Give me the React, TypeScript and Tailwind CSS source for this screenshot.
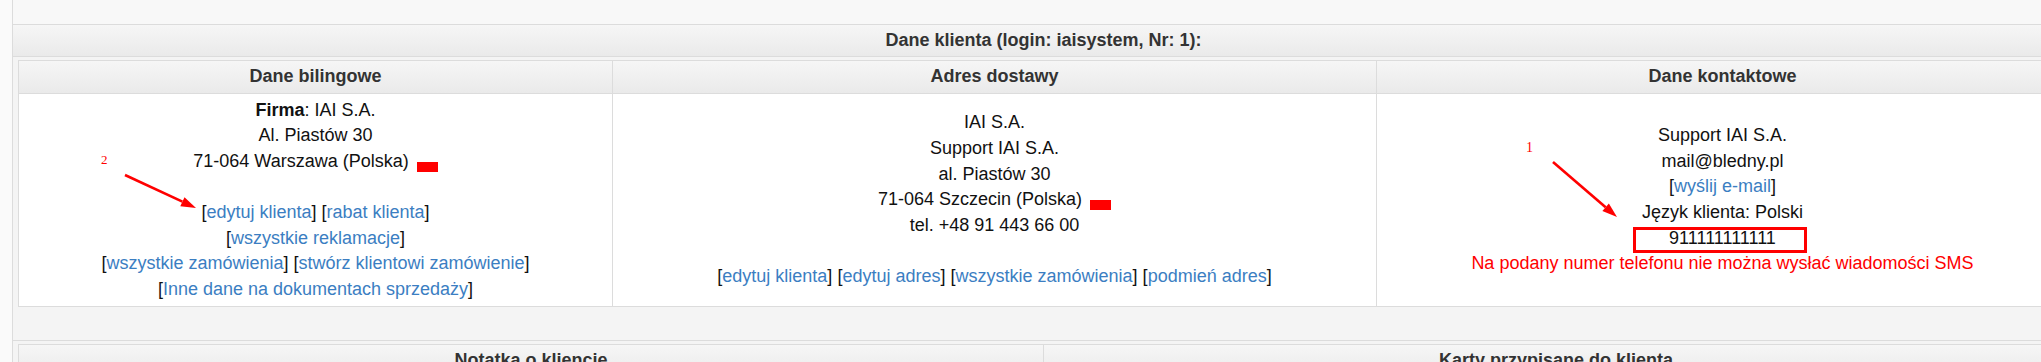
import React from "react";

function Lk({ children }: { children: string }) {
  return (
    <span>
      [<a href="#" className="text-[#3b7ec2] no-underline">{children}</a>]
    </span>
  );
}

function Flag() {
  return <span className="ml-[3px] inline-block h-[10px] w-[21px] bg-[#ff0000] align-[-5px]" />;
}

function Arrow({ x1, y1, x2, y2 }: { x1: number; y1: number; x2: number; y2: number }) {
  const dx = x2 - x1;
  const dy = y2 - y1;
  const len = Math.hypot(dx, dy);
  const ux = dx / len;
  const uy = dy / len;
  const bx = x2 - ux * 15;
  const by = y2 - uy * 15;
  const px = -uy * 5;
  const py = ux * 5;
  return (
    <g>
      <line x1={x1} y1={y1} x2={bx} y2={by} stroke="#ff0000" strokeWidth={2.6} />
      <polygon points={`${x2},${y2} ${bx + px},${by + py} ${bx - px},${by - py}`} fill="#ff0000" />
    </g>
  );
}

export default function App() {
  return (
    <div className="h-[362px] w-full overflow-hidden bg-[#fafafa] font-['Liberation_Sans',Arial,sans-serif] text-[18px] leading-[25.6px] text-[#111]">
      <div className="ml-[12px] w-[2063px] border-x border-[#dcdcdc] bg-[#f4f4f4]">
        <div className="h-[25px] border-b border-[#dcdcdc] bg-[#f8f8f8]" />
        <div className="flex h-[32px] items-center justify-center border-b border-[#dcdcdc] bg-linear-to-b from-[#f6f6f6] to-[#eaeaea] font-bold text-[#333]">
          Dane klienta (login: iaisystem, Nr: 1):
        </div>

        {/* dane klienta */}
        <div className="border-b border-[#dcdcdc] px-[5px] pt-[3px] pb-[33px]">
          <div className="grid grid-cols-[593px_764px_692px] border border-[#dcdcdc] bg-white">
            <div className="flex h-[33px] items-center justify-center border-b border-[#dcdcdc] bg-linear-to-b from-[#f6f6f6] to-[#eaeaea] font-bold text-[#333]">
              Dane bilingowe
            </div>
            <div className="flex h-[33px] items-center justify-center border-b border-l border-[#dcdcdc] bg-linear-to-b from-[#f6f6f6] to-[#eaeaea] font-bold text-[#333]">
              Adres dostawy
            </div>
            <div className="flex h-[33px] items-center justify-center border-b border-l border-[#dcdcdc] bg-linear-to-b from-[#f6f6f6] to-[#eaeaea] font-bold text-[#333]">
              Dane kontaktowe
            </div>

            <div className="relative flex h-[212px] flex-col items-center justify-center text-center">
              <div>
                <b>Firma</b>: IAI S.A.
              </div>
              <div>Al. Piastów 30</div>
              <div>
                71-064 Warszawa (Polska) <Flag />
              </div>
              <div>&nbsp;</div>
              <div>
                <Lk>edytuj klienta</Lk> <Lk>rabat klienta</Lk>
              </div>
              <div>
                <Lk>wszystkie reklamacje</Lk>
              </div>
              <div>
                <Lk>wszystkie zamówienia</Lk> <Lk>stwórz klientowi zamówienie</Lk>
              </div>
              <div>
                <Lk>Inne dane na dokumentach sprzedaży</Lk>
              </div>
              <span className="absolute top-[59px] left-[82px] font-['Liberation_Serif',serif] text-[13px] leading-none text-[#ff0000]">
                2
              </span>
              <svg className="pointer-events-none absolute inset-0 h-full w-full">
                <Arrow x1={106} y1={81} x2={177} y2={114} />
              </svg>
            </div>

            <div className="flex h-[212px] flex-col items-center justify-center border-l border-[#dcdcdc] text-center">
              <div>IAI S.A.</div>
              <div>Support IAI S.A.</div>
              <div>al. Piastów 30</div>
              <div>
                71-064 Szczecin (Polska) <Flag />
              </div>
              <div>tel. +48 91 443 66 00</div>
              <div>&nbsp;</div>
              <div>
                <Lk>edytuj klienta</Lk> <Lk>edytuj adres</Lk> <Lk>wszystkie zamówienia</Lk>{" "}
                <Lk>podmień adres</Lk>
              </div>
            </div>

            <div className="relative flex h-[212px] flex-col items-center justify-center border-l border-[#dcdcdc] text-center">
              <div>Support IAI S.A.</div>
              <div>mail@bledny.pl</div>
              <div>
                <Lk>wyślij e-mail</Lk>
              </div>
              <div>Język klienta: Polski</div>
              <div>
                <span className="relative inline-block">
                  911111111111
                  <span className="pointer-events-none absolute top-[1px] right-[-31px] bottom-[-2px] left-[-36px] border-[3px] border-[#ff0000]" />
                </span>
              </div>
              <div className="text-[#ff0000]">Na podany numer telefonu nie można wysłać wiadomości SMS</div>
              <span className="absolute top-[47px] left-[149px] font-['Liberation_Serif',serif] text-[14px] leading-none text-[#ff0000]">
                1
              </span>
              <svg className="pointer-events-none absolute inset-0 h-full w-full">
                <Arrow x1={176} y1={68} x2={240} y2={123} />
              </svg>
            </div>
          </div>
        </div>

        {/* notatka / karty */}
        <div className="px-[5px] pt-[3px]">
          <div className="grid grid-cols-[1024px_1025px] border border-[#dcdcdc] bg-white">
            <div className="flex h-[33px] items-center justify-center border-b border-[#dcdcdc] bg-linear-to-b from-[#f6f6f6] to-[#eaeaea] font-bold text-[#333]">
              Notatka o kliencie
            </div>
            <div className="flex h-[33px] items-center justify-center border-b border-l border-[#dcdcdc] bg-linear-to-b from-[#f6f6f6] to-[#eaeaea] font-bold text-[#333]">
              Karty przypisane do klienta
            </div>
          </div>
        </div>
      </div>
    </div>
  );
}
